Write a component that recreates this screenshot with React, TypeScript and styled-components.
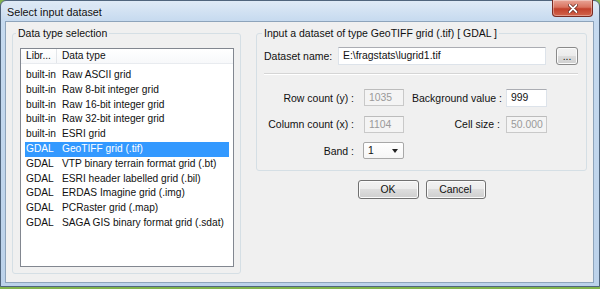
import React from 'react'
import styled, { createGlobalStyle } from 'styled-components'

const GlobalStyle = createGlobalStyle`
    html, body { margin:0; padding:0; }
    body {
        background:#82b44e;
        font-family:"Liberation Sans", Arial, sans-serif;
        overflow:hidden;
    }
`;

const Window = styled.div`
    box-sizing:border-box;
    width:600px;
    height:287px;
    display:flex;
    flex-direction:column;
    padding:0 6px 4px 5px;
    border:1px solid #50657d;
    border-radius:6px 6px 0 0;
    background:linear-gradient(180deg, #dfeaf6 0px, #c6daef 20px, #bcd2ea 100%);
`;

const TitleBar = styled.div`
    height:21px;
    display:flex;
    justify-content:space-between;
    align-items:flex-start;
`;

const Title = styled.div`
    padding:5px 0 0 1px;
    font-size:10.8px;
    color:#111;
    text-shadow:0 0 6px rgba(255,255,255,.9);
`;

const CloseButton = styled.div`
    width:39px;
    height:16px;
    margin-top:-1px;
    display:flex;
    align-items:center;
    justify-content:center;
    border:1px solid #7a2b22;
    border-top:none;
    border-radius:0 0 4px 4px;
    background:linear-gradient(180deg, #e9a597 0%, #d9735f 45%, #c2412c 55%, #d2654c 100%);
    box-shadow:inset 0 0 0 1px rgba(255,255,255,.35);
`;

const Client = styled.div`
    flex:1;
    display:flex;
    align-items:flex-start;
    gap:15px;
    padding:5px 0 0 6px;
    background:#f0f0f0;
    box-shadow:0 0 0 1px #8ea4bb;
`;

const Group = styled.fieldset<{ $w: number; $h: number; $pl: number; $pr: number }>`
    box-sizing:border-box;
    width:${p => p.$w}px;
    height:${p => p.$h}px;
    margin:0;
    padding:7px ${p => p.$pr}px 5px ${p => p.$pl}px;
    border:1px solid #d5dfe5;
    border-radius:3px;
    min-width:0;
`;

const Legend = styled.legend<{ $ml: number }>`
    padding:0 2px;
    margin-left:${p => p.$ml}px;
    font-size:10.5px;
    line-height:13px;
    color:#111;
`;

const ListBox = styled.div`
    box-sizing:border-box;
    height:219px;
    margin-top:1px;
    border:1px solid #828790;
    background:#fff;
    font-size:10.2px;
    color:#111;
`;

const HeaderRow = styled.div`
    display:flex;
    height:14px;
    line-height:14px;
    border-bottom:1px solid #e8ebef;
    background:linear-gradient(180deg, #fff 0%, #f7f8fa 100%);
`;

const HeaderCell = styled.div<{ $w?: number }>`
    ${p => p.$w ? `width:${p.$w}px; border-right:1px solid #e3e6ea; box-sizing:border-box;` : 'flex:1;'}
    padding-left:5px;
    white-space:nowrap;
    overflow:hidden;
`;

const Rows = styled.div`
    padding-top:4px;
`;

const Row = styled.div<{ $selected?: boolean }>`
    display:grid;
    grid-template-columns:37px 1fr;
    margin:0 4px;
    height:14.8px;
    line-height:14.8px;
    white-space:nowrap;
    background:${p => p.$selected ? '#3399ff' : 'transparent'};
    color:${p => p.$selected ? '#fff' : '#111'};
    span:first-child { padding-left:1px; }
`;

const RightColumn = styled.div`
    display:flex;
    flex-direction:column;
    width:331px;
`;

const NameRow = styled.div`
    display:flex;
    align-items:center;
    height:18px;
`;

const Label = styled.div<{ $w?: number; $pr?: number }>`
    ${p => p.$w ? `width:${p.$w}px;` : ''}
    box-sizing:border-box;
    padding-right:${p => p.$pr || 0}px;
    text-align:${p => p.$pr ? 'right' : 'left'};
    font-size:10.5px;
    color:#111;
    white-space:nowrap;
`;

const TextBox = styled.div<{ $w: number; $disabled?: boolean }>`
    box-sizing:border-box;
    width:${p => p.$w}px;
    height:${p => p.$disabled ? 17 : 18}px;
    line-height:15px;
    padding-left:4px;
    font-size:10.4px;
    border:1px solid ${p => p.$disabled ? '#c9c9c9' : '#dde3ea'};
    border-top-color:${p => p.$disabled ? '#bcbcbc' : '#abadb3'};
    background:${p => p.$disabled ? '#f4f4f4' : '#fff'};
    color:${p => p.$disabled ? '#9a9a9a' : '#111'};
    white-space:nowrap;
    overflow:hidden;
`;

const Button = styled.div<{ $w: number }>`
    box-sizing:border-box;
    width:${p => p.$w}px;
    height:19px;
    display:flex;
    align-items:center;
    justify-content:center;
    font-size:10.4px;
    color:#111;
    border:1px solid #707070;
    border-radius:3px;
    background:linear-gradient(180deg, #f2f2f2 0%, #ebebeb 50%, #dddddd 50%, #cfcfcf 100%);
    box-shadow:inset 0 0 0 1px #fbfbfb;
`;

const BrowseButton = styled(Button)`
    height:18px;
    margin-left:10px;
    border-color:#8a8a8a;
    align-items:flex-end;
    padding-bottom:3px;
    line-height:8px;
`;

const Separator = styled.div`
    margin-top:8px;
    border-top:1px solid #d5d5d5;
    border-bottom:1px solid #fff;
`;

const Fields = styled.div`
    display:grid;
    grid-template-columns:100px 48px 94px 41px;
    grid-auto-rows:17px;
    row-gap:9.5px;
    align-items:center;
    margin-top:14px;
`;

const Combo = styled.div`
    box-sizing:border-box;
    width:41px;
    height:17px;
    display:flex;
    align-items:center;
    justify-content:space-between;
    padding:0 5px 0 4px;
    font-size:10.4px;
    border:1px solid #a8a8a8;
    border-radius:2px;
    background:linear-gradient(180deg, #fff 0%, #f6f6f6 100%);
    color:#111;
    margin-left:-1px;
`;

const ButtonRow = styled.div`
    display:flex;
    justify-content:center;
    gap:7px;
    margin-top:9px;
`;

const types: [string, string][] = [
    ['built-in', 'Raw ASCII grid'],
    ['built-in', 'Raw 8-bit integer grid'],
    ['built-in', 'Raw 16-bit integer grid'],
    ['built-in', 'Raw 32-bit integer grid'],
    ['built-in', 'ESRI grid'],
    ['GDAL', 'GeoTIFF grid (.tif)'],
    ['GDAL', 'VTP binary terrain format grid (.bt)'],
    ['GDAL', 'ESRI header labelled grid (.bil)'],
    ['GDAL', 'ERDAS Imagine grid (.img)'],
    ['GDAL', 'PCRaster grid (.map)'],
    ['GDAL', 'SAGA GIS binary format grid (.sdat)'],
];

const App = () => {
    return <>
        <GlobalStyle />
        <Window>
            <TitleBar>
                <Title>Select input dataset</Title>
                <CloseButton>
                    <svg width="10" height="9" viewBox="0 0 10 9">
                        <path d="M1.5 1 L8.5 8 M8.5 1 L1.5 8" stroke="#5a1a12" strokeWidth="3.2" strokeLinecap="round" />
                        <path d="M1.5 1 L8.5 8 M8.5 1 L1.5 8" stroke="#fff" strokeWidth="1.8" strokeLinecap="round" />
                    </svg>
                </CloseButton>
            </TitleBar>
            <Client>
                <Group $w={ 229 } $h={ 247 } $pl={ 7 } $pr={ 6 }>
                    <Legend $ml={ -4 }>Data type selection</Legend>
                    <ListBox>
                        <HeaderRow>
                            <HeaderCell $w={ 36 }>Libr...</HeaderCell>
                            <HeaderCell>Data type</HeaderCell>
                        </HeaderRow>
                        <Rows>
                            {
                                types.map(([lib, name], i) => <Row key={ name } $selected={ i === 5 }>
                                    <span>{ lib }</span>
                                    <span>{ name }</span>
                                </Row>)
                            }
                        </Rows>
                    </ListBox>
                </Group>
                <RightColumn>
                    <Group $w={ 331 } $h={ 144 } $pl={ 7 } $pr={ 8 }>
                        <Legend $ml={ -2 }>Input a dataset of type GeoTIFF grid (.tif) [ GDAL ]</Legend>
                        <NameRow>
                            <Label $w={ 74 }>Dataset name:</Label>
                            <TextBox $w={ 208 }>E:\fragstats\lugrid1.tif</TextBox>
                            <BrowseButton $w={ 22 }>...</BrowseButton>
                        </NameRow>
                        <Separator />
                        <Fields>
                            <Label $pr={ 10 }>Row count (y) :</Label>
                            <TextBox $w={ 40 } $disabled>1035</TextBox>
                            <Label $pr={ 6 }>Background value :</Label>
                            <TextBox $w={ 41 }>999</TextBox>

                            <Label $pr={ 10 }>Column count (x) :</Label>
                            <TextBox $w={ 40 } $disabled>1104</TextBox>
                            <Label $pr={ 6 }>Cell size :</Label>
                            <TextBox $w={ 41 } $disabled>50.000</TextBox>

                            <Label $pr={ 10 }>Band :</Label>
                            <Combo>
                                <span>1</span>
                                <svg width="6" height="4" viewBox="0 0 6 4"><path d="M0 0 H6 L3 4 Z" fill="#222" /></svg>
                            </Combo>
                        </Fields>
                    </Group>
                    <ButtonRow>
                        <Button $w={ 61 }>OK</Button>
                        <Button $w={ 60 }>Cancel</Button>
                    </ButtonRow>
                </RightColumn>
            </Client>
        </Window>
    </>
}
export default App
